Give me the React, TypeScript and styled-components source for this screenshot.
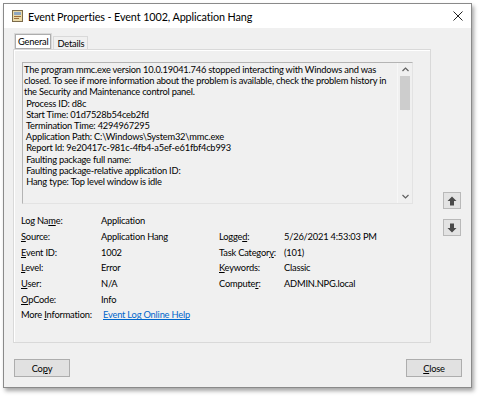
import styled, { createGlobalStyle } from "styled-components";

const GlobalStyle = createGlobalStyle`
	html, body {
		margin: 0;
		padding: 0;
		background: #ffffff;
	}
	body {
		font-family: "Lato", "Open Sans", sans-serif;
		font-size: 9.3px;
		letter-spacing: -0.2px;
		color: #000;
	}
`;

const Page = styled.div`
	width: 481px;
	height: 397px;
	padding: 3px 0 0 3px;
	box-sizing: border-box;
`;

const Window = styled.div`
	width: 469px;
	height: 385px;
	box-sizing: border-box;
	border: 1px solid #8a8a8a;
	background: #f0f0f0;
	box-shadow: 2px 3px 4px rgba(0, 0, 0, 0.35);
	display: flex;
	flex-direction: column;
`;

const TitleBar = styled.div`
	height: 24px;
	background: #ffffff;
	display: flex;
	align-items: center;
	padding: 0 8px 0 8px;
	gap: 5px;
	font-size: 10.8px;
	letter-spacing: -0.1px;
`;

const TitleText = styled.span`
	flex: 1;
	white-space: nowrap;
`;

const Body = styled.div`
	flex: 1;
	display: grid;
	grid-template-columns: 418px 1fr;
	grid-template-rows: 1fr auto;
	padding: 5px 0 10px 9px;
`;

const TabArea = styled.div`
	display: flex;
	flex-direction: column;
	min-width: 0;
`;

const TabStrip = styled.div`
	display: flex;
	align-items: flex-end;
	height: 16px;
	padding-left: 1px;
`;

const Tab = styled.div<{ $active?: boolean }>`
	height: ${(p) => (p.$active ? "16px" : "13px")};
	padding: 0 3px;
	box-sizing: border-box;
	display: flex;
	align-items: center;
	border: 1px solid #d9d9d9;
	border-bottom: none;
	background: ${(p) => (p.$active ? "#ffffff" : "#f0f0f0")};
	box-shadow: ${(p) => (p.$active ? "inset 0 0 0 1px #adadad" : "none")};
	margin-right: 1px;
	position: relative;
	z-index: ${(p) => (p.$active ? 1 : 0)};
`;

const Panel = styled.div`
	height: 294px;
	border: 1px solid #d9d9d9;
	box-shadow: inset 1px 1px 0 #ffffff;
	box-sizing: border-box;
	padding: 12px 17px 0 8px;
	display: flex;
	flex-direction: column;
`;

const DescriptionBox = styled.div`
	height: 142px;
	box-sizing: border-box;
	border: 1px solid #b4b4b4;
	border-right-color: #e3e3e3;
	border-bottom-color: #e3e3e3;
	display: flex;
	background: #f0f0f0;
`;

const DescriptionText = styled.div`
	flex: 1;
	min-width: 0;
	overflow: hidden;
	padding: 1px 0 0 1px;
	line-height: 11.2px;
	white-space: pre;
`;

const ScrollBar = styled.div`
	width: 14px;
	flex: none;
	border-left: 1px solid #f7f7f7;
	display: flex;
	flex-direction: column;
	align-items: center;
`;

const ScrollArrow = styled.div`
	height: 13px;
	display: flex;
	align-items: center;
	justify-content: center;
`;

const ScrollTrack = styled.div`
	flex: 1;
	width: 100%;
	display: flex;
	justify-content: center;
`;

const ScrollThumb = styled.div`
	width: 10px;
	height: 34px;
	background: #cdcdcd;
`;

const InfoGrid = styled.div`
	margin-top: 9px;
	margin-left: -1px;
	display: grid;
	grid-template-columns: 80px 118px 65px 1fr;
	grid-auto-rows: 15.7px;
	align-items: center;
`;

const Label = styled.span`
	white-space: nowrap;
`;

const Value = styled.span`
	white-space: nowrap;
`;

const Link = styled.a`
	color: #0066cc;
	text-decoration: underline;
	margin-left: 2px;
	white-space: nowrap;
`;

const Key = styled.u``;

const SideColumn = styled.div`
	padding: 159px 0 0 12px;
	display: flex;
	flex-direction: column;
	gap: 10px;
`;

const ArrowButton = styled.div`
	width: 18px;
	height: 17px;
	box-sizing: border-box;
	border: 1px solid #b9b9b9;
	background: #e3e3e3;
	display: flex;
	align-items: center;
	justify-content: center;
`;

const ButtonRow = styled.div`
	grid-column: 1 / span 2;
	display: flex;
	justify-content: space-between;
	padding: 15px 9px 0 1px;
`;

const Button = styled.div`
	width: 56px;
	height: 18px;
	box-sizing: border-box;
	border: 1px solid #adadad;
	background: #e1e1e1;
	display: flex;
	align-items: center;
	justify-content: center;
`;

const description = `The program mmc.exe version 10.0.19041.746 stopped interacting with Windows and was
closed. To see if more information about the problem is available, check the problem history in
the Security and Maintenance control panel.
 Process ID: d8c
 Start Time: 01d7528b54ceb2fd
 Termination Time: 4294967295
 Application Path: C:\\Windows\\System32\\mmc.exe
 Report Id: 9e20417c-981c-4fb4-a5ef-e61fbf4cb993
 Faulting package full name: 
 Faulting package-relative application ID: 
 Hang type: Top level window is idle`;

const AppIcon = () => (
	<svg width="11" height="12" viewBox="0 0 11 12">
		<rect x="0.5" y="0.5" width="10" height="11" fill="#e9d9a8" stroke="#7b6a4a" />
		<rect x="2" y="2" width="7" height="3" fill="#8fa6c0" />
		<rect x="2" y="6" width="7" height="1" fill="#9b6b3a" />
		<rect x="2" y="8" width="5" height="1" fill="#9b6b3a" />
	</svg>
);

const CloseIcon = () => (
	<svg width="10" height="10" viewBox="0 0 10 10">
		<path d="M0.5 0.5 L9.5 9.5 M9.5 0.5 L0.5 9.5" stroke="#222" strokeWidth="1" />
	</svg>
);

const Chevron = ({ up }: { up?: boolean }) => (
	<svg width="7" height="5" viewBox="0 0 7 5">
		<path
			d={up ? "M0.5 4 L3.5 1 L6.5 4" : "M0.5 1 L3.5 4 L6.5 1"}
			fill="none"
			stroke="#606060"
			strokeWidth="1.2"
		/>
	</svg>
);

const BigArrow = ({ up }: { up?: boolean }) => (
	<svg width="10" height="10" viewBox="0 0 10 10">
		<path
			d={up ? "M5 0.5 L9.5 5 L7 5 L7 9.5 L3 9.5 L3 5 L0.5 5 Z" : "M5 9.5 L9.5 5 L7 5 L7 0.5 L3 0.5 L3 5 L0.5 5 Z"}
			fill="#4a4a4a"
		/>
	</svg>
);

const rows = [
	{ label: <>Log Na<Key>m</Key>e:</>, value: "Application" },
	{ label: <><Key>S</Key>ource:</>, value: "Application Hang", label2: <>Logge<Key>d</Key>:</>, value2: "5/26/2021 4:53:03 PM" },
	{ label: <><Key>E</Key>vent ID:</>, value: "1002", label2: <>Task Categor<Key>y</Key>:</>, value2: "(101)" },
	{ label: <><Key>L</Key>evel:</>, value: "Error", label2: <><Key>K</Key>eywords:</>, value2: "Classic" },
	{ label: <><Key>U</Key>ser:</>, value: "N/A", label2: <>Compute<Key>r</Key>:</>, value2: "ADMIN.NPG.local" },
	{ label: <><Key>O</Key>pCode:</>, value: "Info" },
];

export default function App() {
	return (
		<>
			<GlobalStyle />
			<Page>
				<Window>
					<TitleBar>
						<AppIcon />
						<TitleText>Event Properties - Event 1002, Application Hang</TitleText>
						<CloseIcon />
					</TitleBar>
					<Body>
						<TabArea>
							<TabStrip>
								<Tab $active>General</Tab>
								<Tab>Details</Tab>
							</TabStrip>
							<Panel>
								<DescriptionBox>
									<DescriptionText>{description}</DescriptionText>
									<ScrollBar>
										<ScrollArrow>
											<Chevron up />
										</ScrollArrow>
										<ScrollTrack>
											<ScrollThumb />
										</ScrollTrack>
										<ScrollArrow>
											<Chevron />
										</ScrollArrow>
									</ScrollBar>
								</DescriptionBox>
								<InfoGrid>
									{rows.flatMap((r, i) => [
										<Label key={`l${i}`}>{r.label}</Label>,
										<Value key={`v${i}`}>{r.value}</Value>,
										<Label key={`l2${i}`}>{r.label2}</Label>,
										<Value key={`v2${i}`}>{r.value2}</Value>,
									])}
									<Label>
										More <Key>I</Key>nformation:
									</Label>
									<Link href="#">Event Log Online Help</Link>
								</InfoGrid>
							</Panel>
						</TabArea>
						<SideColumn>
							<ArrowButton>
								<BigArrow up />
							</ArrowButton>
							<ArrowButton>
								<BigArrow />
							</ArrowButton>
						</SideColumn>
						<ButtonRow>
							<Button>
								Co<Key>p</Key>y
							</Button>
							<Button>
								<Key>C</Key>lose
							</Button>
						</ButtonRow>
					</Body>
				</Window>
			</Page>
		</>
	);
}
